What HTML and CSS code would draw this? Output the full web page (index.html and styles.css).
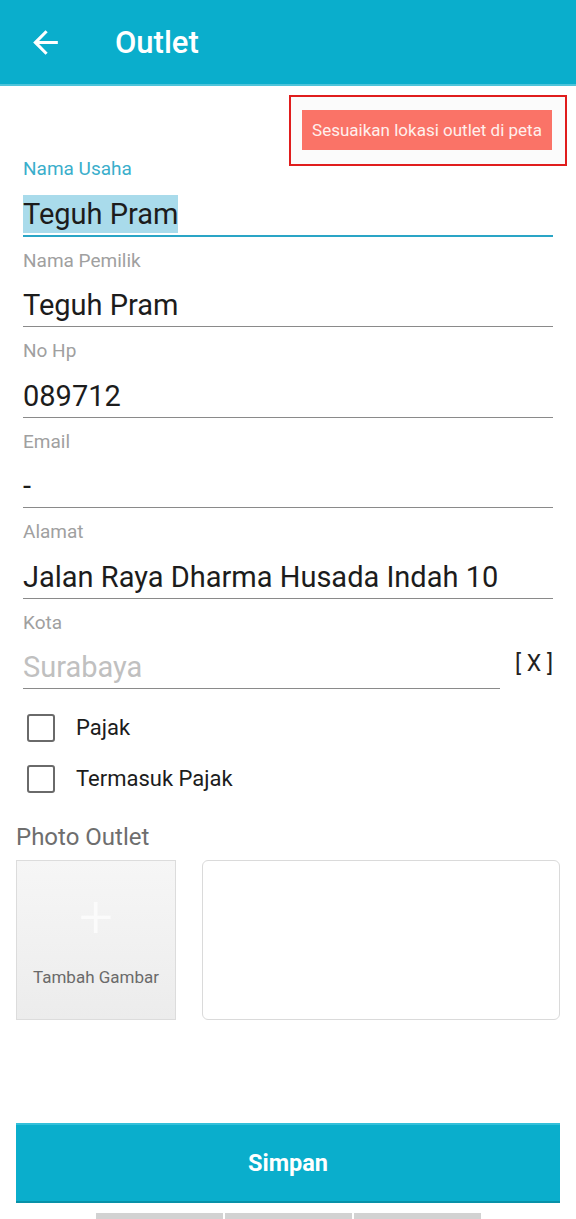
FILE: index.html
```html
<!DOCTYPE html>
<html lang="id">
<head>
  <meta charset="UTF-8">
  <title>Outlet</title>
  <link rel="stylesheet" href="styles.css">
</head>
<body>

<div class="appbar">
  <svg class="back" viewBox="0 0 24 24" width="37" height="37">
    <path d="M20 11H7.83l5.59-5.59L12 4l-8 8 8 8 1.41-1.41L7.83 13H20v-2z" fill="#fff"/>
  </svg>
  <h1 class="title">Outlet</h1>
</div>

<div class="map-row">
  <div class="map-frame">
    <button class="map-btn">Sesuaikan lokasi outlet di peta</button>
  </div>
</div>

<div class="form">
  <div class="field active">
    <div class="label">Nama Usaha</div>
    <div class="value"><span class="selected">Teguh Pram</span></div>
  </div>
  <div class="field">
    <div class="label">Nama Pemilik</div>
    <div class="value">Teguh Pram</div>
  </div>
  <div class="field">
    <div class="label">No Hp</div>
    <div class="value">089712</div>
  </div>
  <div class="field">
    <div class="label">Email</div>
    <div class="value">-</div>
  </div>
  <div class="field">
    <div class="label">Alamat</div>
    <div class="value">Jalan Raya Dharma Husada Indah 10</div>
  </div>
  <div class="city-row">
    <div class="field">
      <div class="label">Kota</div>
      <div class="value placeholder">Surabaya</div>
    </div>
    <div class="clear">[ X ]</div>
  </div>

  <div class="checks">
    <label class="check"><span class="box"></span>Pajak</label>
    <label class="check"><span class="box"></span>Termasuk Pajak</label>
  </div>
</div>

<div class="photo">
  <div class="photo-title">Photo Outlet</div>
  <div class="photo-row">
    <div class="add-image">
      <span class="plus">+</span>
      <span class="add-text">Tambah Gambar</span>
    </div>
    <div class="preview"></div>
  </div>
</div>

<div class="footer">
  <button class="save">Simpan</button>
  <div class="nav-hint">
    <span></span><span></span><span></span>
  </div>
</div>

</body>
</html>
```

FILE: styles.css
```css
body {
  margin: 0;
  background: #fff;
  font-family: Roboto, "Noto Sans", sans-serif;
  color: #1c1c1c;
}

.appbar {
  height: 84px;
  background: #0aaecc;
  border-bottom: 2px solid #4fc4da;
  display: flex;
  align-items: center;
}

.back {
  margin-left: 27px;
}

.title {
  margin: 0 0 0 51px;
  color: #fff;
  font-size: 31px;
  font-weight: 500;
}

.map-row {
  display: flex;
  justify-content: flex-end;
  padding: 9px 9px 0 0;
  margin-bottom: -8px;
}

.map-frame {
  border: 2px solid #e01d1d;
  padding: 13px 13px 14px 11px;
  background: #fbfbfb;
}

.map-btn {
  width: 250px;
  height: 40px;
  border: none;
  background: #fa7367;
  color: #ffefec;
  font-family: Roboto, sans-serif;
  font-size: 17px;
  white-space: nowrap;
  padding: 0;
}

.form {
  padding: 0 23px;
}

.field {
  margin-bottom: 13px;
  border-bottom: 1px solid #8a8a8a;
}

.field .label {
  height: 22px;
  line-height: 22px;
  font-size: 19px;
  color: #a0a0a0;
}

.field .value {
  margin-top: 13.5px;
  height: 41px;
  line-height: 41px;
  font-size: 29px;
  color: #1c1c1c;
}

.field.active {
  border-bottom: 2px solid #2aa5c6;
}

.field.active .label {
  color: #3aaecb;
}

.selected {
  background: #a9dbeb;
  display: inline-block;
  line-height: 38px;
}

.value.placeholder {
  color: #c0c0c0;
}

.city-row {
  display: flex;
  align-items: flex-start;
}

.city-row .field {
  flex: 1;
  margin-right: 15px;
}

.clear {
  margin-top: 38px;
  font-size: 23px;
  color: #222;
  width: 38px;
  white-space: nowrap;
}

.checks {
  padding: 0 0 0 4px;
}

.check {
  display: flex;
  align-items: center;
  height: 51px;
  font-size: 22px;
  color: #1c1c1c;
}

.box {
  width: 24px;
  height: 24px;
  border: 2px solid #6a6a6a;
  border-radius: 3px;
  margin-right: 21px;
}

.photo {
  padding: 0 16px;
  margin-top: 18px;
}

.photo-title {
  font-size: 24px;
  color: #6e6e6e;
  height: 30px;
  line-height: 30px;
  margin-bottom: 8px;
}

.photo-row {
  display: flex;
  gap: 26px;
}

.add-image {
  width: 158px;
  height: 158px;
  border: 1px solid #dcdcdc;
  background: linear-gradient(#f6f6f6, #ececec);
  display: flex;
  flex-direction: column;
  align-items: center;
}

.plus {
  margin-top: 18px;
  font-size: 60px;
  line-height: 76px;
  font-weight: 300;
  color: #fbfbfb;
}

.add-text {
  margin-top: 12px;
  font-size: 17px;
  color: #6a6a6a;
}

.preview {
  flex: 1;
  height: 158px;
  border: 1px solid #dadada;
  border-radius: 6px;
}

.footer {
  padding: 0 16px;
  margin-top: 103px;
}

.save {
  width: 100%;
  height: 80px;
  border: none;
  border-top: 2px solid #33c0da;
  border-bottom: 2px solid #0891a8;
  background: #0aaecc;
  color: #fff;
  font-family: Roboto, sans-serif;
  font-size: 23.5px;
  font-weight: 700;
}

.nav-hint {
  display: flex;
  justify-content: center;
  gap: 2px;
  margin-top: 10px;
}

.nav-hint span {
  width: 127px;
  height: 8px;
  background: #d2d2d2;
}
```
